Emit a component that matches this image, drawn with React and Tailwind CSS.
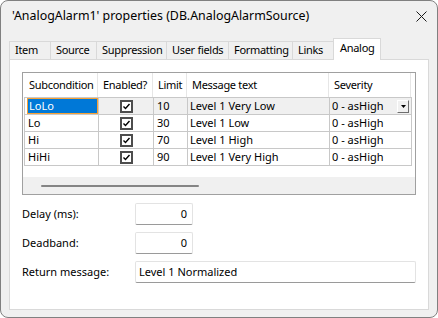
import React from 'react';

const TABS = [
  { label: 'Item', w: 'w-[41px]' },
  { label: 'Source', w: 'w-[46px]' },
  { label: 'Suppression', w: 'w-[70px]' },
  { label: 'User fields', w: 'w-[62px]' },
  { label: 'Formatting', w: 'w-[64px]' },
  { label: 'Links', w: 'w-[41px]' },
];

const COLS = [
  { label: 'Subcondition', w: 'w-[74px]' },
  { label: 'Enabled?', w: 'w-[55px]' },
  { label: 'Limit', w: 'w-[34px]' },
  { label: 'Message text', w: 'w-[142px]' },
  { label: 'Severity', w: 'w-[82px]' },
];

const ROWS = [
  { name: 'LoLo', limit: '10', msg: 'Level 1 Very Low', sev: '0 - asHigh' },
  { name: 'Lo', limit: '30', msg: 'Level 1 Low', sev: '0 - asHigh' },
  { name: 'Hi', limit: '70', msg: 'Level 1 High', sev: '0 - asHigh' },
  { name: 'HiHi', limit: '90', msg: 'Level 1 Very High', sev: '0 - asHigh' },
];

const CheckBox = () => (
  <svg width="13" height="13" viewBox="0 0 13 13">
    <rect x="1" y="1" width="11" height="11" fill="#fff" stroke="#4d4d4d" strokeWidth="2" />
    <path d="M3.5 6.5 L5.5 8.5 L9.5 4" fill="none" stroke="#000" strokeWidth="1.4" />
  </svg>
);

function Field({ label, value, wide }) {
  return (
    <div className="flex items-center h-[22px]">
      <span className="w-[113px]">{label}</span>
      <div
        className={
          'h-[22px] bg-white border border-[#e3e3e3] border-b-[#9a9a9a] rounded-[2px] flex items-center ' +
          (wide ? 'w-[281px] pl-[3px]' : 'w-[58px] justify-end pr-[5px]')
        }
      >
        {value}
      </div>
    </div>
  );
}

export default function App() {
  return (
    <div className="w-[438px] h-[318px] bg-[#f0f0f0] border border-[#808080] rounded-[8px] flex flex-col text-[11px] text-black font-['Segoe_UI','Noto_Sans',sans-serif] overflow-hidden">
      {/* title bar */}
      <div className="h-[30px] flex items-center justify-between pl-[11px] pr-[10px]">
        <span className="text-[12.4px]">'AnalogAlarm1' properties (DB.AnalogAlarmSource)</span>
        <svg width="11" height="11" viewBox="0 0 11 11">
          <path d="M0.5 0.5 L10.5 10.5 M10.5 0.5 L0.5 10.5" stroke="#1a1a1a" strokeWidth="1" />
        </svg>
      </div>

      {/* tabs */}
      <div className="mt-[7px] ml-[8px] h-[21px] flex items-end tracking-[-0.3px]">
        {TABS.map(t => (
          <div
            key={t.label}
            className={t.w + ' h-[18px] border-l border-t border-[#d9d9d9] pl-[5px] flex items-center whitespace-nowrap'}
          >
            {t.label}
          </div>
        ))}
        <div className="w-[48px] h-[22px] -mb-px relative z-10 bg-white border border-b-0 border-[#d9d9d9] pl-[6px] pb-[2px] flex items-center">
          Analog
        </div>
      </div>

      {/* panel */}
      <div className="mx-[8px] h-[251px] bg-white border border-[#d9d9d9] pl-[12px] pt-[12px]">
        {/* grid */}
        <div className="w-[394px] h-[123px] border border-[#a0a0a0] flex flex-col">
          <div className="pl-px">
            <div className="flex h-[24px] tracking-[-0.3px]">
              {COLS.map(c => (
                <div key={c.label} className={c.w + ' border-r border-[#e6e6e6] pl-[5px] flex items-center whitespace-nowrap'}>
                  {c.label}
                </div>
              ))}
            </div>
            <div className="w-[388px] border-l border-t border-[#c8c8c8]">
              {ROWS.map((r, i) => {
                const sel = i === 0;
                const rowBg = sel ? 'bg-[#f0f0f0]' : 'bg-white';
                return (
                  <div key={r.name} className="flex h-[17px] border-b border-[#c8c8c8]">
                    <div className="w-[74px] border-r border-[#c8c8c8] flex items-stretch">
                      {sel ? (
                        <div className="ml-[2px] flex-1 bg-[#0078d7] border border-[#f7a134] text-white pl-px flex items-center">
                          {r.name}
                        </div>
                      ) : (
                        <div className="pl-[3px] flex items-center">{r.name}</div>
                      )}
                    </div>
                    <div className={'w-[55px] border-r border-[#c8c8c8] flex items-center justify-center ' + rowBg}>
                      <CheckBox />
                    </div>
                    <div className={'w-[34px] border-r border-[#c8c8c8] pl-[3px] flex items-center ' + rowBg}>
                      {r.limit}
                    </div>
                    <div className={'w-[142px] border-r border-[#c8c8c8] pl-[2px] flex items-center ' + rowBg}>
                      {r.msg}
                    </div>
                    <div className={'w-[82px] border-r border-[#c8c8c8] pl-[2px] flex items-center justify-between ' + rowBg}>
                      <span>{r.sev}</span>
                      {sel && (
                        <div className="w-[12px] h-[13px] mr-[2px] bg-[#f0f0f0] border border-t-white border-l-white border-r-[#6e6e6e] border-b-[#6e6e6e] flex items-center justify-center">
                          <svg width="5" height="3" viewBox="0 0 5 3">
                            <path d="M0 0 H5 L2.5 3 Z" fill="#000" />
                          </svg>
                        </div>
                      )}
                    </div>
                  </div>
                );
              })}
            </div>
          </div>
          <div className="flex-1" />
          <div className="h-[17px] bg-[#f0f0f0] pt-[8px] pl-[18px]">
            <div className="w-[158px] h-[2px] rounded-full bg-[#858585]" />
          </div>
        </div>

        {/* fields */}
        <div className="mt-[8px] flex flex-col gap-[7px]">
          <Field label="Delay (ms):" value="0" />
          <Field label="Deadband:" value="0" />
          <Field label="Return message:" value="Level 1 Normalized" wide />
        </div>
      </div>
    </div>
  );
}
